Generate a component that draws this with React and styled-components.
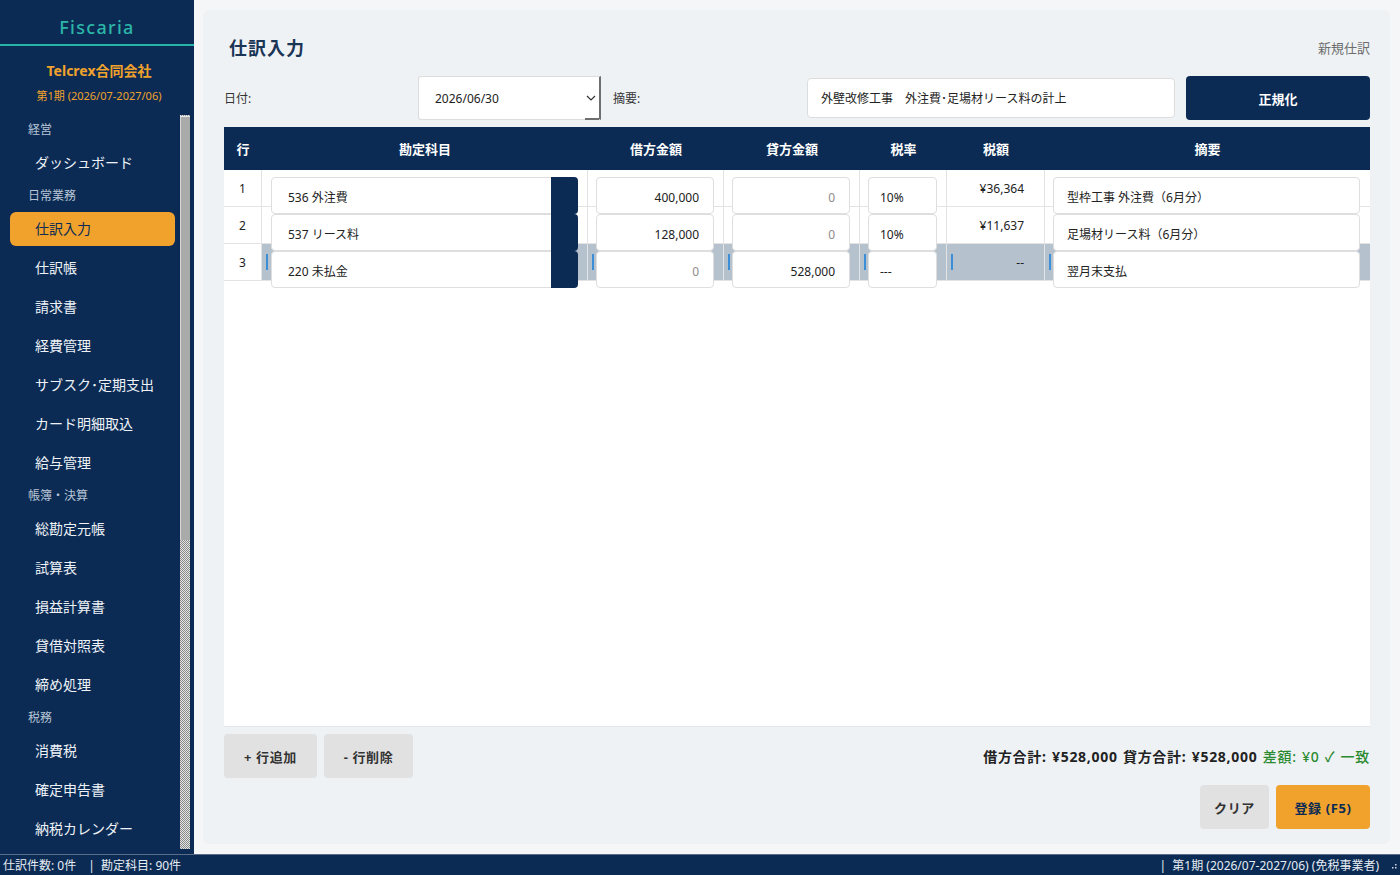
import styled, { createGlobalStyle } from "styled-components"

const NAVY = "#0b2b54"
const ORANGE = "#f0a22c"

const GlobalStyle = createGlobalStyle`
  html, body { margin: 0; padding: 0; background: #f5f6f7; }
  body { font-family: "Noto Sans", "Noto Sans CJK JP", sans-serif; color: #222; }
  * { box-sizing: border-box; }
`

const navSections = [
  { title: "経営", items: ["ダッシュボード"] },
  {
    title: "日常業務",
    items: ["仕訳入力", "仕訳帳", "請求書", "経費管理", "サブスク･定期支出", "カード明細取込", "給与管理"],
  },
  { title: "帳簿・決算", items: ["総勘定元帳", "試算表", "損益計算書", "貸借対照表", "締め処理"] },
  { title: "税務", items: ["消費税", "確定申告書", "納税カレンダー"] },
]

const columns = ["行", "勘定科目", "借方金額", "貸方金額", "税率", "税額", "摘要"]

const rows = [
  { no: 1, account: "536 外注費", debit: "400,000", credit: "0", rate: "10%", tax: "¥36,364", memo: "型枠工事 外注費（6月分）" },
  { no: 2, account: "537 リース料", debit: "128,000", credit: "0", rate: "10%", tax: "¥11,637", memo: "足場材リース料（6月分）" },
  { no: 3, account: "220 未払金", debit: "0", credit: "528,000", rate: "---", tax: "--", memo: "翌月末支払", selected: true },
]

const App = () => {
  return (
    <Shell>
      <GlobalStyle />
      <Body>
        <Sidebar>
          <Brand>Fiscaria</Brand>
          <Company>
            <CompanyName>Telcrex合同会社</CompanyName>
            <Period>第1期 (2026/07-2027/06)</Period>
          </Company>
          <ScrollArea>
            <Nav>
              {navSections.map((s) => (
                <div key={s.title}>
                  <NavHeader>{s.title}</NavHeader>
                  {s.items.map((item) => (
                    <NavItem key={item} $active={item === "仕訳入力"}>{item}</NavItem>
                  ))}
                </div>
              ))}
            </Nav>
            <ScrollTrack>
              <ScrollThumb />
            </ScrollTrack>
          </ScrollArea>
        </Sidebar>

        <Main>
          <Panel>
            <TitleRow>
              <Title>仕訳入力</Title>
              <SubLink>新規仕訳</SubLink>
            </TitleRow>

            <FormRow>
              <FieldLabel>日付:</FieldLabel>
              <DateSelect>
                <span>2026/06/30</span>
                <svg width="10" height="6" viewBox="0 0 10 6">
                  <path d="M1 1 L5 5 L9 1" fill="none" stroke="#333" strokeWidth="1.2" />
                </svg>
              </DateSelect>
              <FieldLabel $gap>摘要:</FieldLabel>
              <TextBox>外壁改修工事　外注費･足場材リース料の計上</TextBox>
              <PrimaryButton>正規化</PrimaryButton>
            </FormRow>

            <Table>
              <HeadRow>
                {columns.map((c) => (
                  <HeadCell key={c}>{c}</HeadCell>
                ))}
              </HeadRow>
              {rows.map((r) => (
                <BodyRow key={r.no}>
                  <NoCell>{r.no}</NoCell>
                  <Cell $sel={r.selected}>
                    {r.selected && <Marker />}
                    <AccountBox>
                      <span>{r.account}</span>
                      <AccountButton />
                    </AccountBox>
                  </Cell>
                  <Cell $sel={r.selected}>
                    {r.selected && <Marker />}
                    <InputBox $align="right" $muted={r.debit === "0"}>{r.debit}</InputBox>
                  </Cell>
                  <Cell $sel={r.selected}>
                    {r.selected && <Marker />}
                    <InputBox $align="right" $muted={r.credit === "0"}>{r.credit}</InputBox>
                  </Cell>
                  <Cell $sel={r.selected}>
                    {r.selected && <Marker />}
                    <InputBox $pad="11px">{r.rate}</InputBox>
                  </Cell>
                  <TaxCell $sel={r.selected}>
                    {r.selected && <Marker />}
                    {r.tax}
                  </TaxCell>
                  <Cell $sel={r.selected} $last>
                    {r.selected && <Marker />}
                    <InputBox>{r.memo}</InputBox>
                  </Cell>
                </BodyRow>
              ))}
            </Table>

            <FooterRow>
              <ButtonGroup>
                <GrayButton $w="93px">+ 行追加</GrayButton>
                <GrayButton $w="89px">- 行削除</GrayButton>
              </ButtonGroup>
              <Totals>
                借方合計: ¥528,000 貸方合計: ¥528,000 <Balanced>差額: ¥0 ✓ 一致</Balanced>
              </Totals>
            </FooterRow>

            <ActionRow>
              <GrayButton $w="69px">クリア</GrayButton>
              <SaveButton>登録 (F5)</SaveButton>
            </ActionRow>
          </Panel>
        </Main>
      </Body>

      <StatusBar>
        <span>仕訳件数: 0件　|  勘定科目: 90件</span>
        <StatusRight>
          <span>|  第1期 (2026/07-2027/06) (免税事業者)</span>
          <svg width="10" height="10" viewBox="0 0 10 10">
            <rect x="8" y="4" width="1.5" height="1.5" fill="#d0d8e2" />
            <rect x="5" y="7" width="1.5" height="1.5" fill="#d0d8e2" />
            <rect x="8" y="7" width="1.5" height="1.5" fill="#d0d8e2" />
          </svg>
        </StatusRight>
      </StatusBar>
    </Shell>
  )
}

const Shell = styled.div`
  width: 1400px;
  height: 875px;
  display: flex;
  flex-direction: column;
  overflow: hidden;
`

const Body = styled.div`
  flex: 1;
  display: flex;
  min-height: 0;
`

const Sidebar = styled.aside`
  width: 194px;
  background: ${NAVY};
  display: flex;
  flex-direction: column;
`

const Brand = styled.div`
  height: 46px;
  padding-top: 10px;
  border-bottom: 2px solid #27b3a6;
  display: flex;
  align-items: center;
  justify-content: center;
  color: #2bb6a8;
  font-size: 18px;
  font-weight: 500;
  letter-spacing: 1.3px;
`

const Company = styled.div`
  text-align: center;
  padding-left: 4px;
  margin-bottom: 11px;
`

const CompanyName = styled.div`
  margin-top: 15px;
  font-size: 14px;
  line-height: 20px;
  font-weight: 700;
  color: ${ORANGE};
`

const Period = styled.div`
  margin-top: 7px;
  font-size: 11px;
  line-height: 16px;
  color: ${ORANGE};
`

const ScrollArea = styled.div`
  flex: 1;
  display: flex;
  padding-bottom: 5px;
  min-height: 0;
`

const Nav = styled.nav`
  width: 180px;
  padding: 4px 0 0 10px;
`

const NavHeader = styled.div`
  height: 22px;
  line-height: 22px;
  padding-left: 18px;
  margin-bottom: 5px;
  font-size: 12px;
  color: #b8c5d6;
`

const NavItem = styled.div`
  width: 165px;
  height: 34px;
  margin-bottom: 5px;
  padding: 0 0 3px 25px;
  display: flex;
  align-items: center;
  border-radius: 6px;
  font-size: 14px;
  color: ${(p) => (p.$active ? NAVY : "#eef2f7")};
  background: ${(p) => (p.$active ? ORANGE : "transparent")};
`

const ScrollTrack = styled.div`
  width: 10px;
  background: repeating-conic-gradient(#8a8a8a 0 25%, #e4e4e4 0 50%) 0 0 / 2px 2px;
`

const ScrollThumb = styled.div`
  height: 424px;
  margin-top: 1px;
  background: #aaaaaa;
  border-top: 1px solid #e8e8e8;
  border-left: 1px solid #d6d6d6;
`

const Main = styled.main`
  flex: 1;
  padding: 10px 10px 10px 9px;
  background: #f5f6f7;
`

const Panel = styled.section`
  height: 100%;
  background: #eef2f5;
  border-radius: 6px;
  padding: 0 20px 0 21px;
  display: flex;
  flex-direction: column;
`

const TitleRow = styled.div`
  margin-top: 26px;
  height: 22px;
  display: flex;
  align-items: center;
  justify-content: space-between;
`

const Title = styled.h1`
  margin: 0;
  padding-left: 5px;
  font-size: 18px;
  font-weight: 700;
  color: #1b3556;
  letter-spacing: 1px;
`

const SubLink = styled.span`
  font-size: 13px;
  color: #6d6d6d;
`

const FormRow = styled.div`
  margin-top: 18px;
  height: 44px;
  display: flex;
  align-items: center;
`

const FieldLabel = styled.label`
  width: 194px;
  margin-left: ${(p) => (p.$gap ? "12px" : "0")};
  font-size: 12px;
  color: #333;
`

const DateSelect = styled.div`
  position: relative;
  width: 183px;
  height: 44px;
  padding: 0 3px 0 16px;
  display: flex;
  align-items: center;
  justify-content: space-between;
  background: #fff;
  border: 1px solid #dcdcdc;
  border-right: 2px solid #6e6e6e;
  border-radius: 3px 0 0 3px;
  font-size: 12px;
  color: #222;

  &::after {
    content: "";
    position: absolute;
    right: 0;
    bottom: -1px;
    width: 14px;
    height: 2px;
    background: #6e6e6e;
  }
`

const TextBox = styled.div`
  width: 368px;
  height: 40px;
  padding-left: 13px;
  display: flex;
  align-items: center;
  background: #fff;
  border: 1px solid #dddddd;
  border-radius: 4px;
  font-size: 12px;
  color: #222;
`

const PrimaryButton = styled.button`
  width: 184px;
  height: 44px;
  margin-left: 11px;
  border: none;
  border-radius: 4px;
  background: ${NAVY};
  color: #fff;
  font-family: inherit;
  font-size: 13px;
  font-weight: 700;
`

const GRID = "38px 326px 136px 136px 87px 98px 325px"

const Table = styled.div`
  margin-top: 7px;
  height: 600px;
  background: #fff;
  border-bottom: 1px solid #e4e6e8;
`

const HeadRow = styled.div`
  display: grid;
  grid-template-columns: ${GRID};
  height: 43px;
  background: ${NAVY};
`

const HeadCell = styled.div`
  display: flex;
  align-items: center;
  justify-content: center;
  color: #fff;
  font-size: 13px;
  font-weight: 700;
`

const BodyRow = styled.div`
  display: grid;
  grid-template-columns: ${GRID};
  grid-template-rows: 37px;
  height: 37px;
`

const NoCell = styled.div`
  position: relative;
  display: flex;
  align-items: center;
  justify-content: center;
  font-size: 12px;
  color: #222;
  border-right: 1px solid #e3e3e3;
  border-bottom: 1px solid #e3e3e3;
`

const Cell = styled.div`
  position: relative;
  padding: 7px ${(p) => (p.$last ? "10px" : "9px")} 0 8px;
  background: ${(p) => (p.$sel ? "#b5c1cd" : "transparent")};
  border-right: ${(p) => (p.$last ? "none" : "1px solid #e3e3e3")};
  border-bottom: 1px solid #e3e3e3;
`

const TaxCell = styled.div`
  position: relative;
  display: flex;
  align-items: center;
  justify-content: flex-end;
  padding: 0 20px 0 0;
  font-size: 12px;
  color: #222;
  background: ${(p) => (p.$sel ? "#b5c1cd" : "transparent")};
  border-right: 1px solid #e3e3e3;
  border-bottom: 1px solid #e3e3e3;
`

const Marker = styled.span`
  position: absolute;
  left: 4px;
  top: 10px;
  width: 2px;
  height: 16px;
  background: #3c8ed6;
`

const InputBox = styled.div`
  position: relative;
  z-index: 1;
  height: 37px;
  display: flex;
  align-items: center;
  justify-content: ${(p) => (p.$align === "right" ? "flex-end" : "flex-start")};
  padding: 3px 14px 0 ${(p) => p.$pad || "13px"};
  background: #fff;
  border: 1px solid #dedede;
  border-radius: 4px;
  font-size: 12px;
  color: ${(p) => (p.$muted ? "#8c8c8c" : "#222")};
  white-space: nowrap;
`

const AccountBox = styled.div`
  position: relative;
  z-index: 1;
  height: 37px;
  display: flex;
  align-items: stretch;
  justify-content: space-between;
  background: #fff;
  border: 1px solid #dedede;
  border-radius: 4px;
  font-size: 12px;
  color: #222;
  margin-left: 1px;

  span {
    padding: 3px 0 0 16px;
    display: flex;
    align-items: center;
  }
`

const AccountButton = styled.div`
  width: 27px;
  margin: -1px -1px -1px 0;
  background: ${NAVY};
  border-radius: 0 4px 4px 0;
`

const FooterRow = styled.div`
  margin-top: 7px;
  height: 44px;
  display: flex;
  align-items: center;
  justify-content: space-between;
`

const ButtonGroup = styled.div`
  display: flex;
  gap: 7px;
`

const GrayButton = styled.button`
  width: ${(p) => p.$w};
  height: 44px;
  border: none;
  border-radius: 4px;
  background: #e1e1e1;
  color: #333;
  font-family: inherit;
  font-size: 13px;
  font-weight: 700;
  letter-spacing: 0.6px;
`

const Totals = styled.div`
  font-size: 14px;
  font-weight: 700;
  color: #222;
  letter-spacing: 0.7px;
  word-spacing: 1px;
`

const Balanced = styled.span`
  color: #2b8a2f;
  font-weight: 500;
`

const ActionRow = styled.div`
  margin-top: 7px;
  display: flex;
  justify-content: flex-end;
  gap: 7px;
`

const SaveButton = styled.button`
  width: 94px;
  height: 44px;
  border: none;
  border-radius: 4px;
  background: ${ORANGE};
  color: ${NAVY};
  font-family: inherit;
  font-size: 13px;
  font-weight: 700;
  letter-spacing: 0.6px;
`

const StatusBar = styled.footer`
  height: 21px;
  padding: 0 3px;
  display: flex;
  align-items: center;
  justify-content: space-between;
  background: ${NAVY};
  border-top: 1px solid #5a6e88;
  color: #e6ecf3;
  font-size: 12px;
  white-space: pre;
`

const StatusRight = styled.div`
  display: flex;
  align-items: center;
  gap: 8px;
`

export default App
